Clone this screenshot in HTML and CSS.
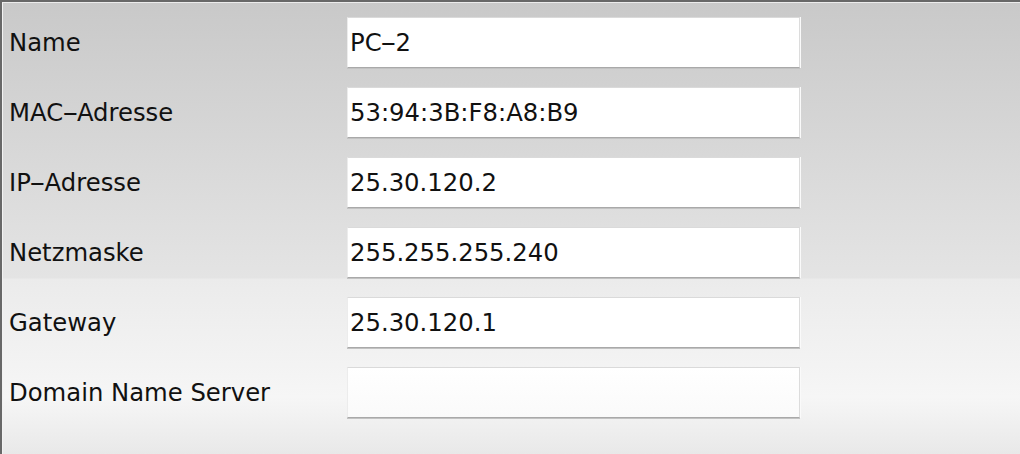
FILE: index.html
```html
<!DOCTYPE html>
<html lang="de">
<head>
<meta charset="utf-8">
<title>PC-2</title>
<link rel="stylesheet" href="styles.css">
</head>
<body>
<div class="panel">
  <div class="inner">
    <div class="form">
      <div class="label">Name</div>
      <div class="field">PC<span class="dash">-</span>2</div>
      <div class="label">MAC<span class="dash">-</span>Adresse</div>
      <div class="field">53:94:3B:F8:A8:B9</div>
      <div class="label">IP<span class="dash">-</span>Adresse</div>
      <div class="field">25.30.120.2</div>
      <div class="label">Netzmaske</div>
      <div class="field">255.255.255.240</div>
      <div class="label">Gateway</div>
      <div class="field">25.30.120.1</div>
      <div class="label">Domain Name Server</div>
      <div class="field field-empty"></div>
    </div>
  </div>
</div>
</body>
</html>
```
FILE: styles.css
```css
html, body {
  margin: 0;
  padding: 0;
}
body {
  width: 1020px;
  height: 454px;
  overflow: hidden;
  font-family: "DejaVu Sans", "Liberation Sans", sans-serif;
  font-size: 24.3px;
  color: #111;
}
.panel {
  width: 1020px;
  height: 454px;
  box-sizing: border-box;
  border-top: 2px solid #686868;
  border-left: 2px solid #686868;
  background: linear-gradient(to bottom,
    #c9c9c9 0px,
    #e4e4e4 276px,
    #ebebeb 277px,
    #f6f6f6 395px,
    #e8e8e8 454px);
}
.inner {
  height: 100%;
  box-sizing: border-box;
  border-top: 1px solid #ececec;
  border-left: 1px solid #f2f2f2;
  padding: 14px 0 0 6px;
}
.form {
  display: grid;
  grid-template-columns: 338px 453px;
  grid-auto-rows: 51px;
  row-gap: 19px;
  align-items: center;
}
.label {
  white-space: nowrap;
}
.dash {
  display: inline-block;
  margin: 0 2.5px;
  transform: scaleX(1.9);
}
.field {
  height: 51px;
  box-sizing: border-box;
  background: #ffffff;
  border-top: 1px solid #dadada;
  border-left: 1px solid #ececec;
  border-right: 1px solid #dcdcdc;
  border-bottom: 1px solid #a9a9a9;
  box-shadow: 1px 0 0 #fafafa, 0 1px 0 #c2c2c2;
  padding: 0 0 0 2px;
  display: flex;
  align-items: center;
  white-space: nowrap;
}
.field-empty {
  background: linear-gradient(to bottom, #ffffff, #fafafa);
}
```
